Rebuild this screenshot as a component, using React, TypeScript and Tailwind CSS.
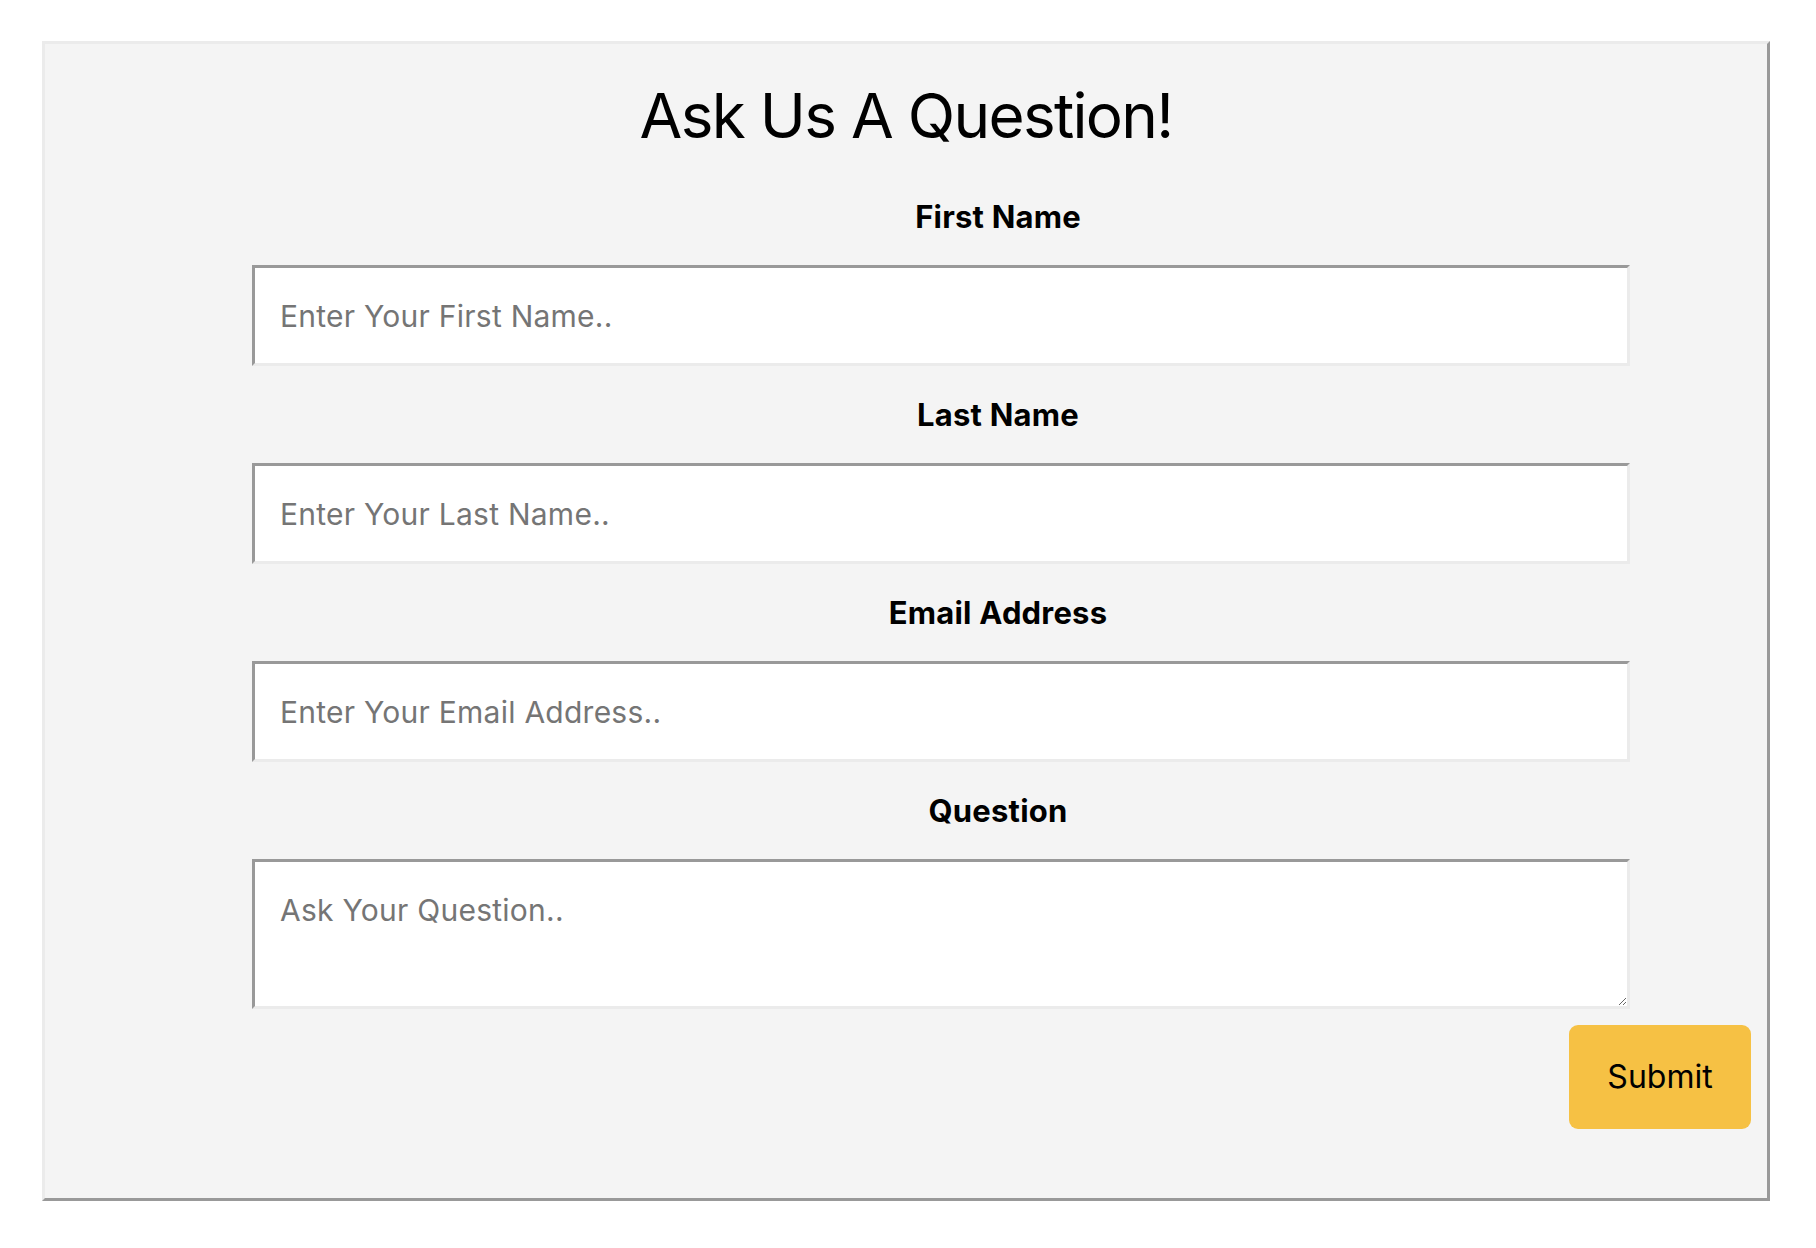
import { useState } from 'react'

const fields = [
  { id: 'firstName', label: 'First Name', placeholder: 'Enter Your First Name..' },
  { id: 'lastName', label: 'Last Name', placeholder: 'Enter Your Last Name..' },
  { id: 'email', label: 'Email Address', placeholder: 'Enter Your Email Address..' },
]

const boxClass =
  'block w-[1378px] bg-white border-[3px] border-t-[#999999] border-l-[#999999] border-r-[#ebebeb] border-b-[#ebebeb] px-[25px] text-[30px] leading-[36px] tracking-[0.25px] text-black outline-none placeholder:text-[#757575]'

const labelClass = 'mt-[31px] mb-[30px] text-center text-[31px] leading-[36px] tracking-[0.2px] font-bold text-black'

export default function App() {
  const [values, setValues] = useState<Record<string, string>>({})

  const update = (id: string, v: string) => setValues((prev) => ({ ...prev, [id]: v }))

  return (
    <div className="min-h-screen bg-white pt-[41px] pl-[42px] font-['Inter',sans-serif]">
      <div className="w-[1728px] bg-[#f4f4f4] border-[3px] border-t-[#ebebeb] border-l-[#ebebeb] border-r-[#999999] border-b-[#999999] pb-[69px] flex flex-col">
        <h1 className="mt-[34px] text-center text-[62px] leading-[75px] tracking-[-1.7px] font-normal text-black">
          Ask Us A Question!
        </h1>

        <form className="ml-[207px] w-[1492px] flex flex-col mt-[15px]" onSubmit={(e) => e.preventDefault()}>
          {fields.map((f) => (
            <div key={f.id} className="flex flex-col">
              <label htmlFor={f.id} className={labelClass}>
                {f.label}
              </label>
              <input
                id={f.id}
                type="text"
                placeholder={f.placeholder}
                value={values[f.id] ?? ''}
                onChange={(e) => update(f.id, e.target.value)}
                className={`${boxClass} h-[101px]`}
              />
            </div>
          ))}

          <label htmlFor="question" className={labelClass}>
            Question
          </label>
          <textarea
            id="question"
            placeholder="Ask Your Question.."
            value={values.question ?? ''}
            onChange={(e) => update('question', e.target.value)}
            className={`${boxClass} h-[150px] pt-[30px]`}
          />
        </form>

        <button
          type="submit"
          className="self-end mr-[16px] mt-[16px] w-[182px] h-[104px] rounded-[9px] bg-[#f6c144] text-[32px] text-black"
        >
          Submit
        </button>
      </div>
    </div>
  )
}
